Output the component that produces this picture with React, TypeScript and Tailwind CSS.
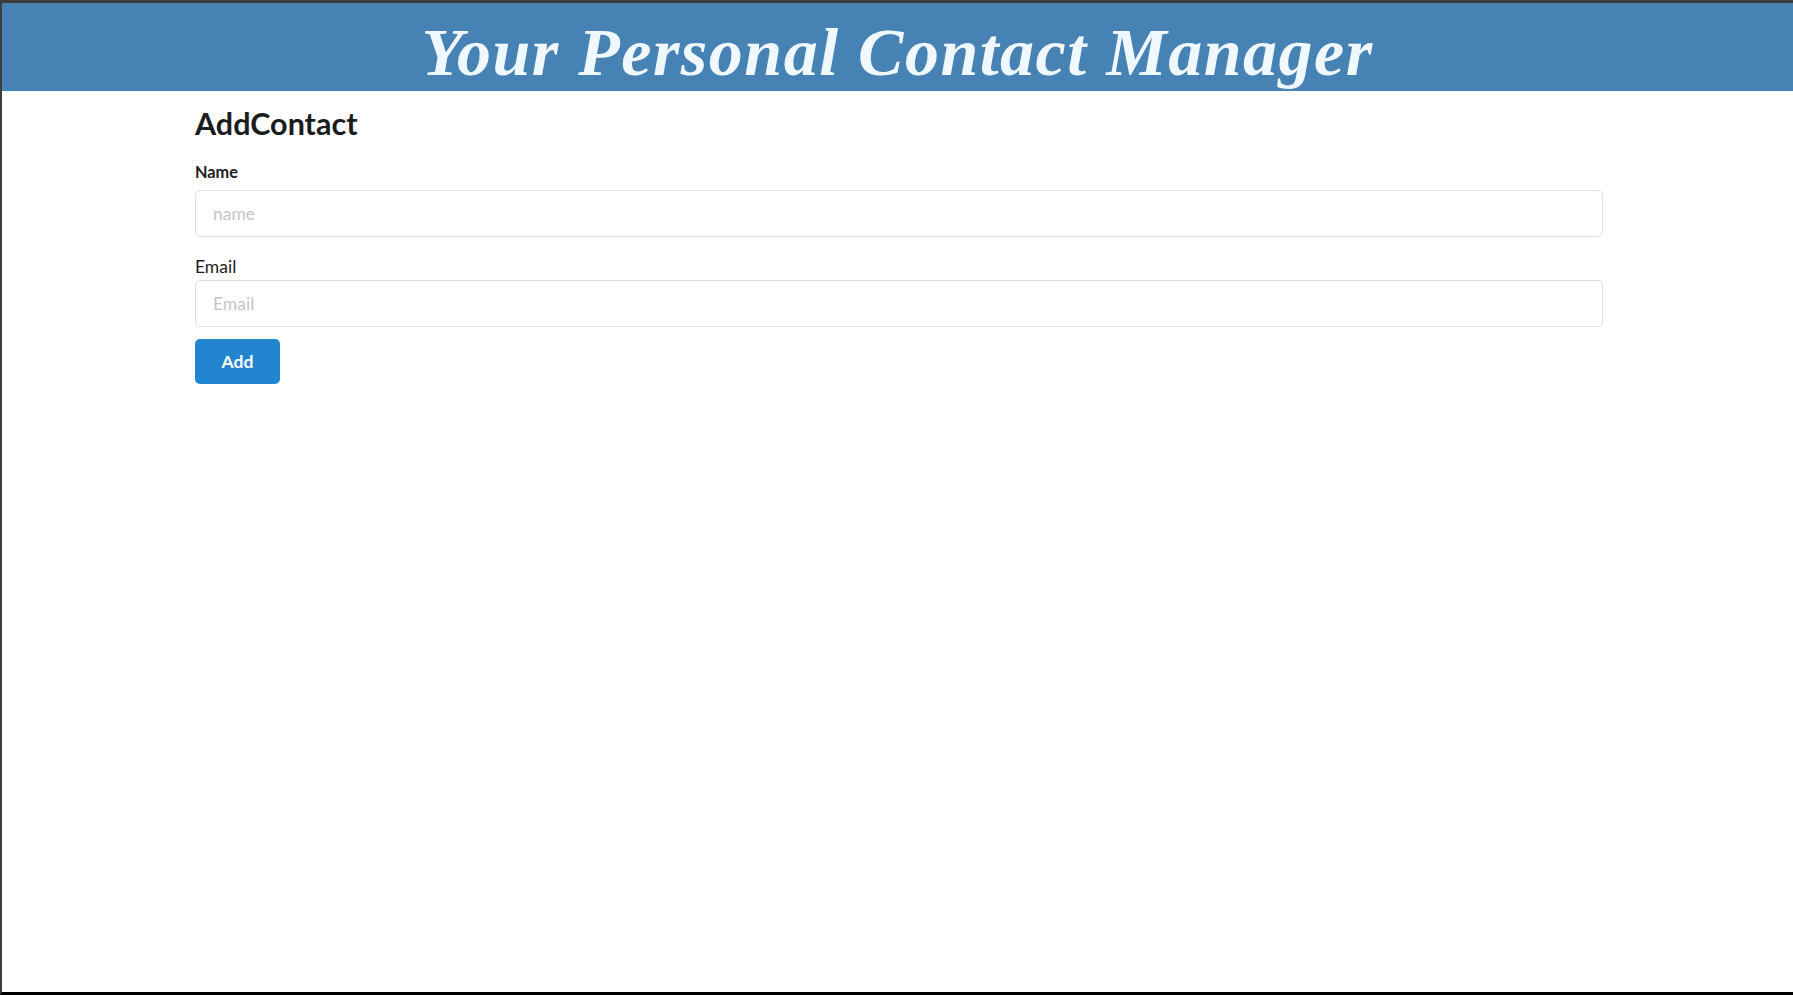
import { useState } from 'react';

export default function App() {
    const [name, setName] = useState('');
    const [email, setEmail] = useState('');

    return (
        <div className="h-[995px] flex flex-col bg-white border-t-[3px] border-l-2 border-b-[3px] border-t-[#3d3d3d] border-l-[#3d3d3d] border-b-black border-r-0 font-['Lato','Helvetica_Neue',Arial,sans-serif]">
            <header className="h-[88px] shrink-0 bg-[#4682b4] flex justify-center overflow-hidden">
                <h1 className="mt-[9px] text-[68px] leading-[80px] tracking-[1.5px] font-bold italic text-[#f0f8ff] font-['Liberation_Serif',Georgia,serif]">
                    Your Personal Contact Manager
                </h1>
            </header>

            <main className="ml-[193px] w-[1408px] pt-[13px]">
                <h2 className="text-[30.5px] leading-[38px] font-bold text-[#1b1c1d]">AddContact</h2>

                <form
                    className="mt-[18px]"
                    onSubmit={(e) => e.preventDefault()}
                >
                    <div className="mb-[17px]">
                        <label className="block text-[16.25px] leading-[23px] font-bold text-[#1b1c1d] mb-[7px]">Name</label>
                        <input
                            type="text"
                            name="name"
                            placeholder="name"
                            value={name}
                            onChange={(e) => setName(e.target.value)}
                            className="block w-full h-[47px] px-[17px] text-[17.5px] text-[#1b1c1d] border border-[#dedede] rounded-[5px] outline-none placeholder:text-[#c5c5c5]"
                        />
                    </div>
                    <div>
                        <label className="block text-[17.5px] leading-[25px] text-[#1b1c1d] mb-[1px]">Email</label>
                        <input
                            type="text"
                            name="email"
                            placeholder="Email"
                            value={email}
                            onChange={(e) => setEmail(e.target.value)}
                            className="block w-full h-[47px] px-[17px] text-[17.5px] text-[#1b1c1d] border border-[#dedede] rounded-[5px] outline-none placeholder:text-[#c5c5c5]"
                        />
                    </div>
                    <button
                        type="submit"
                        className="mt-[12px] h-[45px] px-[26.5px] rounded-[5px] bg-[#2185d0] text-white text-[17.5px] font-bold leading-none"
                    >
                        Add
                    </button>
                </form>
            </main>
        </div>
    );
}
